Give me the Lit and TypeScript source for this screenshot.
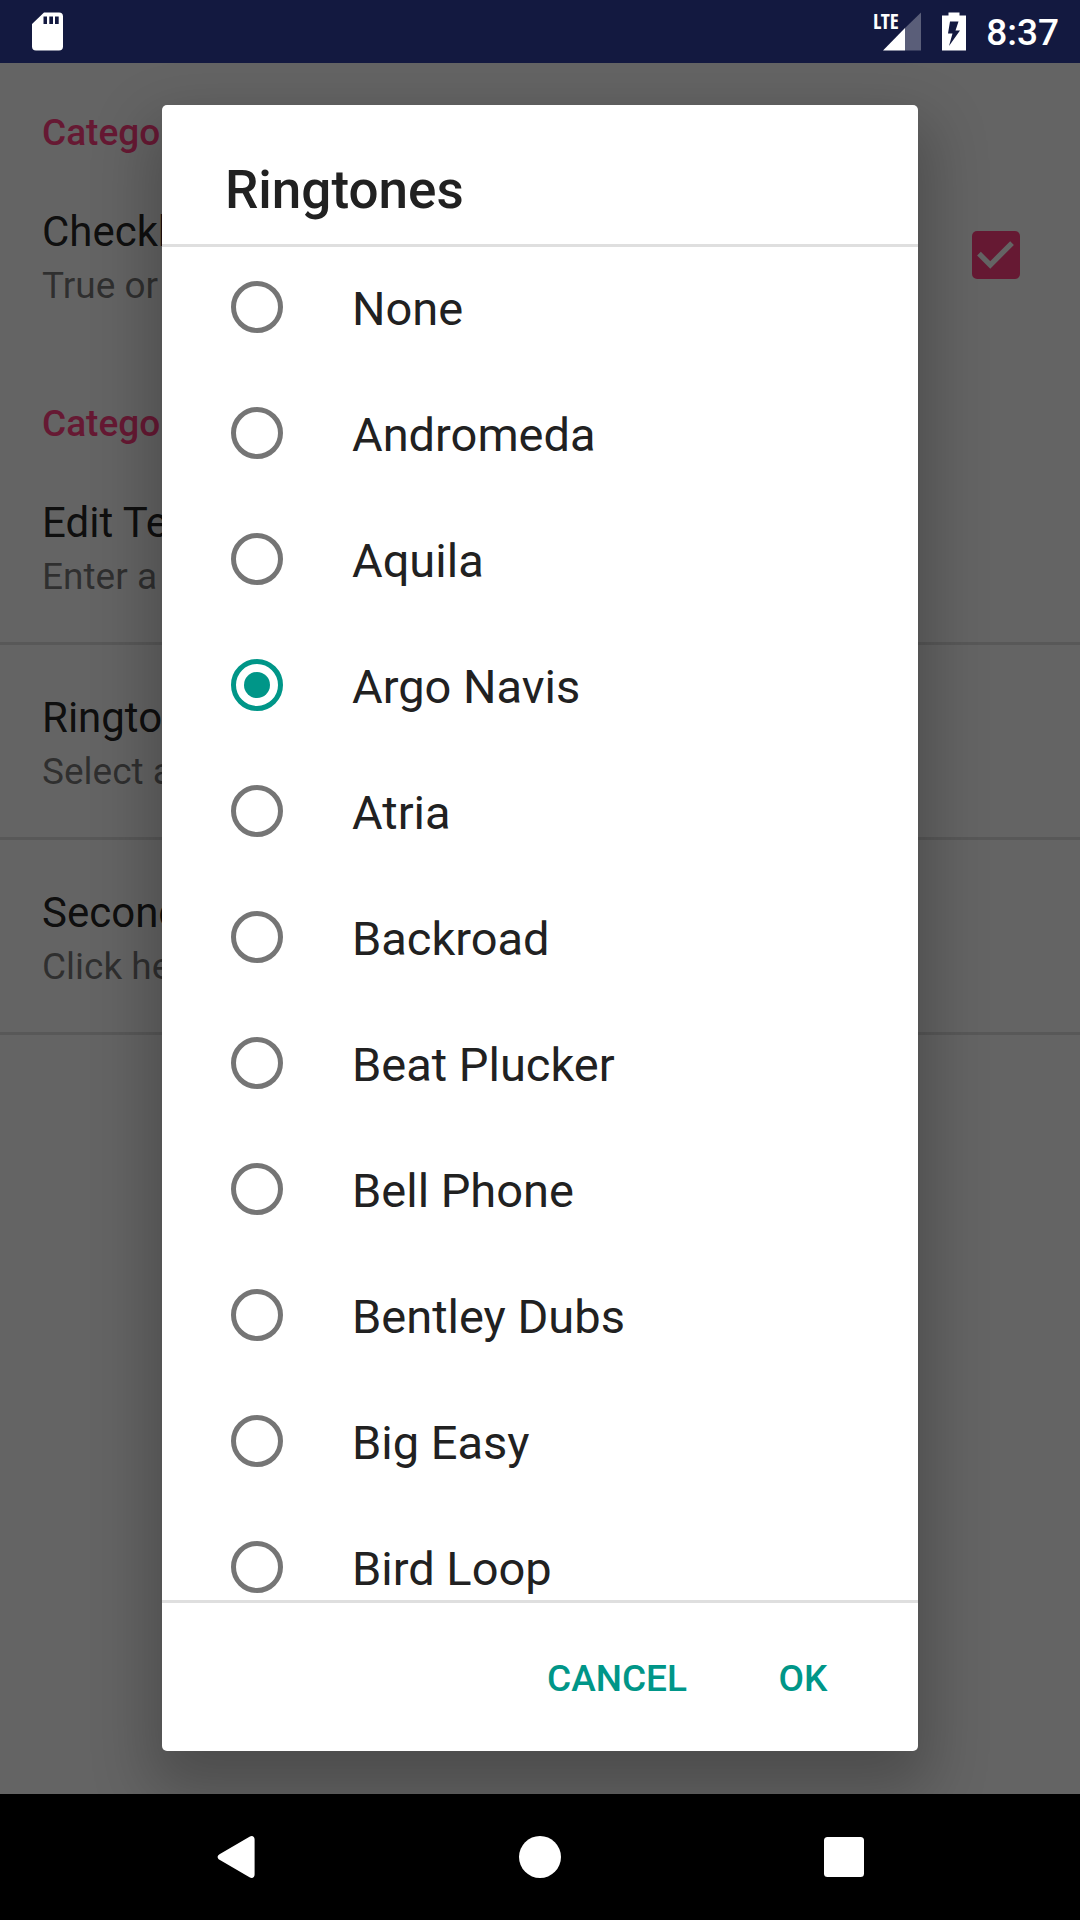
import { LitElement, html, css } from "lit";
import { customElement, property, state } from "lit/decorators.js";

const RINGTONES = [
  "None",
  "Andromeda",
  "Aquila",
  "Argo Navis",
  "Atria",
  "Backroad",
  "Beat Plucker",
  "Bell Phone",
  "Bentley Dubs",
  "Big Easy",
  "Bird Loop",
];

@customElement("status-bar")
class StatusBar extends LitElement {
  static styles = css`
    :host {
      display: flex;
      align-items: center;
      justify-content: space-between;
      height: 63px;
      padding: 0 21px 0 32px;
      background: #131940;
      color: #fff;
    }
    .icon {
      display: block;
      fill: currentColor;
    }
    .right {
      display: flex;
      align-items: center;
      gap: 20px;
    }
    .lte {
      font: bold 21px "Open Sans Condensed", "Liberation Sans Narrow", sans-serif;
    }
    .faint {
      fill-opacity: 0.3;
    }
    .bolt {
      fill: #131940;
    }
    .clock {
      padding-top: 2px;
      font-size: 37px;
      font-weight: 500;
      line-height: 44px;
    }
  `;

  render() {
    return html`
      <svg class="icon" width="32" height="39" viewBox="0 0 32 39" aria-label="SD card">
        <path
          fill-rule="evenodd"
          d="M12 0.500H27A4 4 0 0 1 31 4.500V34.500A4 4 0 0 1 27 38.500H4A4 4 0 0 1 0 34.500V12ZM11.500 4.500V12H15V4.500ZM17.300 4.500V12H21V4.500ZM23 4.500V12H26.700V4.500Z"
        />
      </svg>
      <div class="right">
        <svg class="icon" width="50" height="63" viewBox="-2 -12 50 63" aria-label="Mobile signal">
          <text class="lte" x="-1" y="17">LTE</text>
          <path class="faint" d="M31 16V38.500H47V0.500Z" />
          <path d="M9 38.500L31 16V38.500Z" />
        </svg>
        <svg class="icon" width="24" height="39" viewBox="0 0 24 39" aria-label="Battery charging">
          <path d="M6.500 0.500H17.500V3.500H24V38.500H0V3.500H6.500Z" />
          <path class="bolt" d="M8 9.500H16.500L13.500 18.500H18L7 34L10.500 21.500H6Z" />
        </svg>
        <span class="clock">8:37</span>
      </div>
    `;
  }
}

@customElement("preference-list")
class PreferenceList extends LitElement {
  static styles = css`
    :host {
      display: block;
      background: #fafafa;
    }
    .category {
      margin: 0;
      padding: 50px 42px 6px;
      color: #ff4081;
      font-size: 37px;
      font-weight: 500;
      line-height: 40px;
    }
    .row {
      display: flex;
      align-items: center;
      justify-content: space-between;
      border-bottom: 3px solid rgba(0, 0, 0, 0.12);
      padding: 0 53px 0 42px;
    }
    .row.last {
      border-bottom-color: transparent;
    }
    .texts {
      display: flex;
      flex-direction: column;
      padding: 48px 0 36px;
    }
    .title {
      color: rgba(0, 0, 0, 0.87);
      font-size: 42px;
      line-height: 50px;
    }
    .summary {
      color: rgba(0, 0, 0, 0.54);
      font-size: 37px;
      line-height: 58px;
    }
    .check {
      display: grid;
      place-items: center;
    }
    .check > * {
      grid-area: 1 / 1;
    }
    .box {
      appearance: none;
      width: 48px;
      height: 48px;
      margin: 0;
      border-radius: 5px;
      background: #ff4081;
    }
    .tick {
      pointer-events: none;
      fill: #fafafa;
    }
  `;

  private row(title: string, summary: string) {
    return html`
      <div class="row">
        <div class="texts">
          <span class="title">${title}</span>
          <span class="summary">${summary}</span>
        </div>
      </div>
    `;
  }

  render() {
    return html`
      <h2 class="category">Category</h2>
      <label class="row last">
        <span class="texts">
          <span class="title">Checkbox</span>
          <span class="summary">True or</span>
        </span>
        <span class="check">
          <input class="box" type="checkbox" checked />
          <svg class="tick" width="63" height="63" viewBox="0 0 24 24">
            <path d="M10 17l-5-5 1.410-1.410L10 14.170l7.590-7.590L19 8z" />
          </svg>
        </span>
      </label>
      <h2 class="category">Category</h2>
      ${this.row("Edit Text", "Enter a")} ${this.row("Ringtones", "Select a")}
      ${this.row("Second", "Click here")}
    `;
  }
}

@customElement("ringtone-dialog")
class RingtoneDialog extends LitElement {
  @property({ type: Array }) options: string[] = [];
  @state() private selected = "Argo Navis";

  static styles = css`
    :host {
      display: flex;
      flex-direction: column;
      min-height: 0;
      border-radius: 5px;
      background: #fff;
      color: #212121;
      box-shadow: 0 28px 60px 12px rgba(0, 0, 0, 0.24);
    }
    .heading {
      margin: 0;
      padding: 53px 63px 22px;
      font-size: 53px;
      font-weight: 500;
      line-height: 64px;
    }
    .list {
      flex: 1;
      min-height: 0;
      overflow: hidden auto;
      scrollbar-width: none;
      box-shadow: inset 0 3px 0 #dfdfdf, inset 0 -3px 0 #dfdfdf;
    }
    .option {
      display: flex;
      align-items: center;
      gap: 69px;
      height: 126px;
      padding: 0 69px;
      font-size: 47px;
      line-height: 56px;
    }
    .radio {
      appearance: none;
      display: grid;
      place-items: center;
      flex: none;
      box-sizing: border-box;
      width: 52px;
      height: 52px;
      margin: 0;
      border: 5px solid #757575;
      border-radius: 50%;
    }
    .radio:checked {
      border-color: #009688;
    }
    .radio:checked::before {
      content: "";
      width: 26px;
      height: 26px;
      border-radius: 50%;
      background: #009688;
    }
    .name {
      padding-top: 4px;
    }
    .actions {
      display: flex;
      align-items: center;
      justify-content: flex-end;
      box-sizing: border-box;
      height: 148px;
      padding: 3px 31px 0 0;
    }
    .action {
      min-width: 168px;
      height: 126px;
      border: 0;
      padding: 0 32px;
      background: none;
      color: #009688;
      font: 500 37px/44px "Roboto", sans-serif;
    }
  `;

  render() {
    return html`
      <h1 class="heading" id="heading">Ringtones</h1>
      <div class="list" role="radiogroup" aria-labelledby="heading">
        ${this.options.map(
          (name) => html`
            <label class="option">
              <input
                class="radio"
                type="radio"
                name="ringtone"
                .checked=${name === this.selected}
                @change=${() => (this.selected = name)}
              />
              <span class="name">${name}</span>
            </label>
          `
        )}
      </div>
      <div class="actions">
        <button class="action" type="button">CANCEL</button>
        <button class="action" type="button">OK</button>
      </div>
    `;
  }
}

@customElement("navigation-bar")
class NavigationBar extends LitElement {
  static styles = css`
    :host {
      display: grid;
      grid-template-columns: repeat(3, 1fr);
      height: 126px;
      padding: 0 84px;
      background: #000;
    }
    .key {
      display: grid;
      place-items: center;
      border: 0;
      padding: 0;
      background: none;
    }
    .glyph {
      display: block;
      fill: #fff;
    }
  `;

  render() {
    return html`
      <button class="key" type="button" aria-label="Back">
        <svg class="glyph" width="42" height="42" viewBox="0 0 42 42">
          <path d="M34.500 0.800C37 -0.800 39.600 0.300 39.600 3.500V38.500C39.600 41.700 37 42.800 34.500 41.200L4.500 23.800C2 22.200 2 19.800 4.500 18.200Z" />
        </svg>
      </button>
      <button class="key" type="button" aria-label="Home">
        <svg class="glyph" width="42" height="42" viewBox="0 0 42 42">
          <circle cx="21" cy="21" r="21" />
        </svg>
      </button>
      <button class="key" type="button" aria-label="Overview">
        <svg class="glyph" width="42" height="42" viewBox="0 0 42 42">
          <rect x="1" y="1" width="40" height="40" rx="3.500" />
        </svg>
      </button>
    `;
  }
}

@customElement("app-root")
class AppRoot extends LitElement {
  static styles = css`
    :host {
      display: flex;
      flex-direction: column;
      height: 100vh;
      background: #000;
      font-family: "Roboto", sans-serif;
    }
    .content {
      position: relative;
      display: grid;
      flex: 1;
      min-height: 0;
      overflow: hidden;
    }
    .scrim {
      position: absolute;
      inset: 0;
      display: grid;
      grid-template-rows: minmax(0, 1fr);
      padding: 42px 15% 43px;
      background: rgba(0, 0, 0, 0.6);
    }
  `;

  render() {
    return html`
      <status-bar></status-bar>
      <main class="content">
        <preference-list></preference-list>
        <div class="scrim">
          <ringtone-dialog role="dialog" .options=${RINGTONES}></ringtone-dialog>
        </div>
      </main>
      <navigation-bar></navigation-bar>
    `;
  }
}
